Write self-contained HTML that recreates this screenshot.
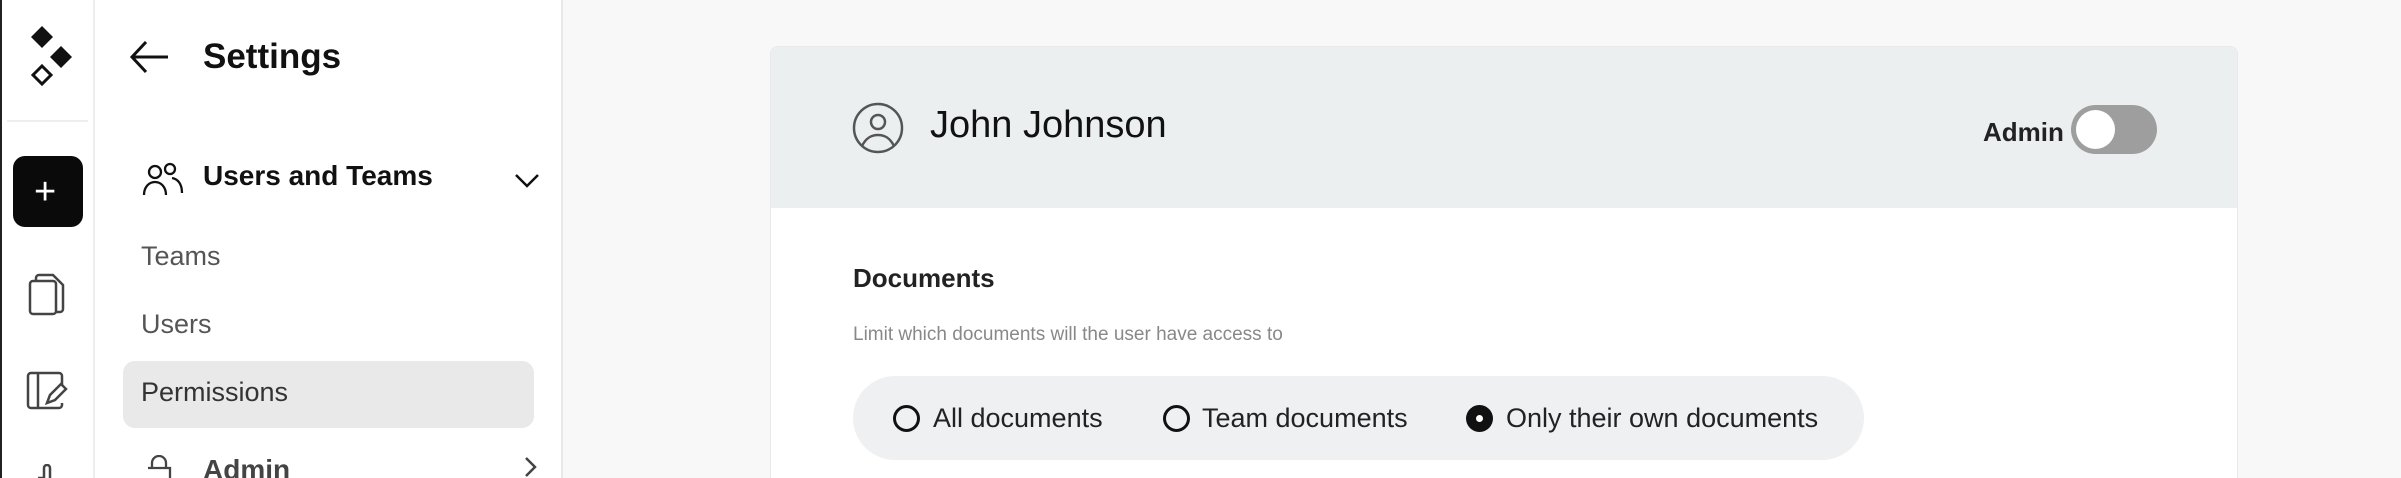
<!DOCTYPE html>
<html><head><style>
*{margin:0;padding:0;box-sizing:border-box}
html,body{width:2401px;height:478px;overflow:hidden}
body{background:#f8f8f8;font-family:"Liberation Sans",sans-serif}
#w{position:relative;width:2401px;height:478px;overflow:hidden}
.a{position:absolute}
.rail{left:0;top:0;width:95px;height:478px;background:#fff;border-left:2px solid #222;border-right:2px solid #eee}
.side{left:95px;top:0;width:468px;height:478px;background:#fff;border-right:2px solid #e8e8e8}
.t{position:absolute;white-space:nowrap;line-height:1}
</style></head><body><div id="w">
<div class="a rail"></div>
<div class="a side"></div>
<svg class="a" style="left:27px;top:25px" width="50" height="66" viewBox="0 0 50 66">
<path d="M15 1 L26 12 L15 23 L4 12Z" fill="#111"/>
<path d="M34 21 L45 32 L34 43 L23 32Z" fill="#111"/>
<path d="M15 41 L24 50 L15 59 L6 50Z" fill="none" stroke="#111" stroke-width="3"/>
</svg>
<div class="a" style="left:7px;top:120px;width:81px;height:2px;background:#eee"></div>
<div class="a" style="left:13px;top:156px;width:70px;height:71px;background:#0a0a0a;border-radius:12px"></div>
<div class="t" style="left:34px;top:173px;color:#fff;font-size:38px">+</div>
<svg class="a" style="left:28px;top:273px" width="40" height="44" viewBox="0 0 40 44" fill="none" stroke="#444" stroke-width="2.5"><rect x="2" y="8" width="26" height="33" rx="3"/><path d="M8 7V5a3 3 0 0 1 3-3h14l10 10v24a3 3 0 0 1-3 3h-4"/></svg>
<svg class="a" style="left:26px;top:371px" width="42" height="40" viewBox="0 0 42 40" fill="none" stroke="#444" stroke-width="2.5"><path d="M36 15V5a3 3 0 0 0-3-3H5a3 3 0 0 0-3 3v29a3 3 0 0 0 3 3h28a3 3 0 0 0 3-3v-2"/><path d="M12 2v35"/><path d="M21 32l3-8 11-11 5 5-11 11z"/></svg>
<svg class="a" style="left:36px;top:464px" width="30" height="14"><path d="M8 14V4a3 3 0 0 1 6 0v10M2 14h6" stroke="#444" stroke-width="2.5" fill="none"/></svg>

<svg class="a" style="left:128px;top:38px" width="44" height="38" viewBox="0 0 44 38" fill="none" stroke="#111" stroke-width="3"><path d="M40 19H4M18 4L4 19l14 15"/></svg>
<div class="t" style="left:203px;top:39px;font-size:35px;font-weight:bold;color:#111">Settings</div>

<svg class="a" style="left:142px;top:162px" width="42" height="34" viewBox="0 0 42 34" fill="none" stroke="#111" stroke-width="2.3"><circle cx="13" cy="10" r="6"/><path d="M2 33c0-8 5-13 11-13s11 5 11 13"/><circle cx="28" cy="7" r="5"/><path d="M30 16c6 1 10 6 10 15"/></svg>
<div class="t" style="left:203px;top:162px;font-size:28px;font-weight:bold;color:#111">Users and Teams</div>
<svg class="a" style="left:514px;top:171px" width="26" height="18" fill="none" stroke="#111" stroke-width="2.5"><path d="M2 4l11 11L24 4"/></svg>
<div class="t" style="left:141px;top:243px;font-size:27px;color:#555">Teams</div>
<div class="t" style="left:141px;top:311px;font-size:27px;color:#555">Users</div>
<div class="a" style="left:123px;top:361px;width:411px;height:67px;background:#e9e9e9;border-radius:12px"></div>
<div class="t" style="left:141px;top:379px;font-size:27px;color:#333">Permissions</div>
<svg class="a" style="left:146px;top:455px" width="26" height="23" fill="none" stroke="#444" stroke-width="2.3"><path d="M6 12V8a7 7 0 0 1 14 0v4M2 13h22v10"/></svg>
<div class="t" style="left:203px;top:456px;font-size:28px;font-weight:bold;color:#444">Admin</div>
<svg class="a" style="left:522px;top:456px" width="18" height="22" fill="none" stroke="#444" stroke-width="2.5"><path d="M4 2l9 9-9 9"/></svg>

<div class="a" style="left:770px;top:46px;width:1468px;height:432px;background:#fff;border:1px solid #e6e8e9;border-bottom:none;border-radius:8px 8px 0 0;overflow:hidden">
<div style="height:161px;background:#eceff0"></div></div>
<svg class="a" style="left:852px;top:102px" width="52" height="52" viewBox="0 0 52 52" fill="none" stroke="#555" stroke-width="2.5"><circle cx="26" cy="26" r="24"/><circle cx="26" cy="20" r="7"/><path d="M10 44c4-8 9-11 16-11s12 3 16 11"/></svg>
<div class="t" style="left:930px;top:106px;font-size:38px;color:#111">John Johnson</div>
<div class="t" style="left:1983px;top:119px;font-size:26px;font-weight:bold;color:#222">Admin</div>
<div class="a" style="left:2071px;top:105px;width:86px;height:49px;background:#9e9e9e;border-radius:25px"></div>
<div class="a" style="left:2076px;top:110px;width:39px;height:39px;background:#fff;border-radius:50%"></div>
<div class="t" style="left:853px;top:265px;font-size:26px;font-weight:bold;color:#222">Documents</div>
<div class="t" style="left:853px;top:325px;font-size:19px;color:#888">Limit which documents will the user have access to</div>
<div class="a" style="left:853px;top:376px;width:1011px;height:84px;background:#eff0f1;border-radius:42px"></div>
<div class="a" style="left:893px;top:405px;width:27px;height:27px;border:3px solid #111;border-radius:50%"></div>
<div class="t" style="left:933px;top:405px;font-size:27px;color:#222">All documents</div>
<div class="a" style="left:1163px;top:405px;width:27px;height:27px;border:3px solid #111;border-radius:50%"></div>
<div class="t" style="left:1202px;top:405px;font-size:27px;color:#222">Team documents</div>
<div class="a" style="left:1466px;top:405px;width:27px;height:27px;background:#111;border-radius:50%"></div>
<div class="a" style="left:1476px;top:415px;width:7px;height:7px;background:#fff;border-radius:50%"></div>
<div class="t" style="left:1506px;top:405px;font-size:27px;color:#222">Only their own documents</div>
</div></body></html>
